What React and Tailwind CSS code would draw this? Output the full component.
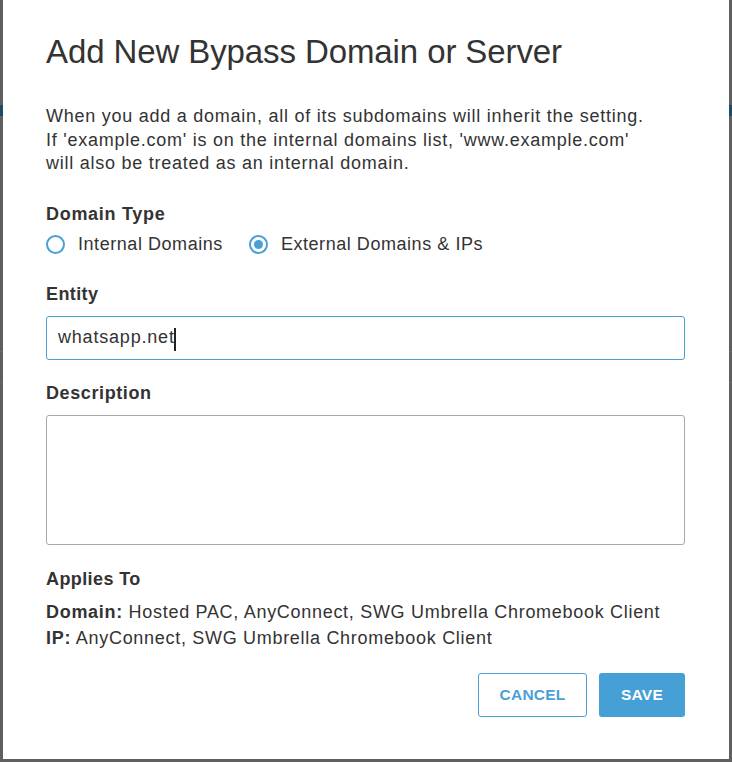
import { useState } from "react";

const font = { fontFamily: '"Liberation Sans", Arial, sans-serif' };

function Radio({ checked, label }) {
  return (
    <label className="flex items-center gap-[13px] cursor-pointer">
      <span className="flex h-[19px] w-[19px] items-center justify-center rounded-full border-2 border-[#4a9fd6] bg-white">
        {checked && <span className="h-[9px] w-[9px] rounded-full bg-[#4a9fd6]" />}
      </span>
      <span className="text-[18px] tracking-[0.55px] text-[#333]">{label}</span>
    </label>
  );
}

export default function App() {
  const [entity, setEntity] = useState("whatsapp.net");
  const [type, setType] = useState("external");

  return (
    <div className="relative h-[762px] w-[732px] overflow-hidden bg-[#5f5f5f]" style={font}>
      {/* dimmed page behind the modal */}
      <div className="flex flex-col">
        <div className="h-[105px]" />
        <div className="h-[11px] bg-[#1d4a64]" />
        <div className="h-[236px] border-b border-[#6a6a6a]" />
        <div className="h-[31px] border-b border-[#6a6a6a]" />
      </div>

      {/* modal */}
      <div className="absolute left-[3px] top-0 h-[759px] w-[726px] bg-white pl-[43px] pr-[44px] pt-[32px] text-[#333]">
        <h1 className="text-[33px] font-normal leading-[40px] tracking-[-0.1px] text-[#333]">
          Add New Bypass Domain or Server
        </h1>

        <p className="mt-[33px] text-[18px] leading-[23.5px] tracking-[0.75px]">
          When you add a domain, all of its subdomains will inherit the setting.
          <br />
          If 'example.com' is on the internal domains list, 'www.example.com'
          <br />
          will also be treated as an internal domain.
        </p>

        <div className="mt-[26px] text-[18px] font-bold leading-[24px] tracking-[0.7px]">Domain Type</div>
        <div className="mt-[7px] flex h-[24px] items-center gap-[26px]">
          <div onClick={() => setType("internal")}>
            <Radio checked={type === "internal"} label="Internal Domains" />
          </div>
          <div onClick={() => setType("external")}>
            <Radio checked={type === "external"} label="External Domains & IPs" />
          </div>
        </div>

        <div className="mt-[25px] text-[18px] font-bold leading-[24px] tracking-[0.4px]">Entity</div>
        <div className="relative mt-[10px]">
          <input
            value={entity}
            onChange={(e) => setEntity(e.target.value)}
            className="block h-[44px] w-full rounded-[3px] border border-[#4a9fd6] px-[11px] text-[18px] tracking-[0.8px] text-[#333] outline-none"
            style={font}
          />
          {/* text caret */}
          <span className="pointer-events-none absolute left-[128px] top-[12px] h-[23px] w-[1.5px] bg-[#222]" />
        </div>

        <div className="mt-[21px] text-[18px] font-bold leading-[24px] tracking-[0.6px]">Description</div>
        <textarea
          className="mt-[10px] block h-[130px] w-full resize-none rounded-[3px] border border-[#aaa] px-[11px] py-[8px] text-[18px] outline-none"
          style={font}
        />

        <div className="mt-[22px] text-[18px] font-bold leading-[24px] tracking-[0.4px]">Applies To</div>
        <div className="mt-[8px] text-[18px] leading-[26px] tracking-[0.7px]">
          <div>
            <span className="font-bold">Domain:</span> Hosted PAC, AnyConnect, SWG Umbrella Chromebook Client
          </div>
          <div>
            <span className="font-bold">IP:</span> AnyConnect, SWG Umbrella Chromebook Client
          </div>
        </div>

        <div className="mt-[22px] flex justify-end gap-[12px]">
          <button className="h-[44px] w-[109px] rounded-[3px] border border-[#4a9fd6] bg-white text-[15.5px] font-bold tracking-[0.2px] text-[#4a9fd6]">
            CANCEL
          </button>
          <button className="h-[44px] w-[86px] rounded-[3px] bg-[#469fd5] text-[15.5px] font-bold tracking-[0.2px] text-white">
            SAVE
          </button>
        </div>
      </div>
    </div>
  );
}
